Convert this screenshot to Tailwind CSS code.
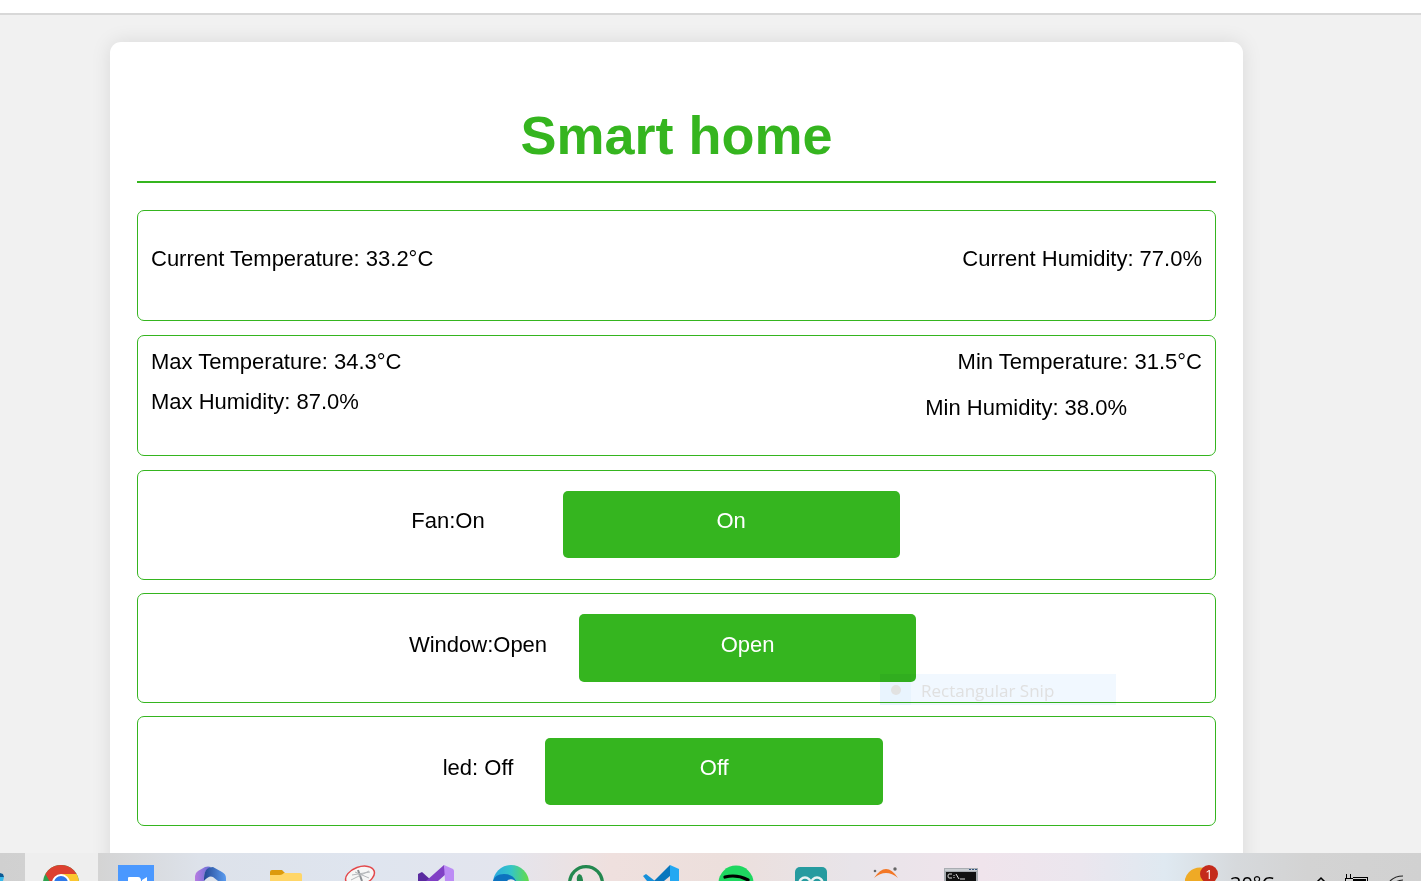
<!DOCTYPE html>
<html lang="en">
<head>
<meta charset="utf-8">
<meta name="viewport" content="width=device-width, initial-scale=1">
<title>Smart home</title>
<script src="https://cdn.jsdelivr.net/npm/@tailwindcss/browser@4"></script>
</head>
<body class="h-screen flex flex-col overflow-hidden bg-[#f1f1f1] font-['Liberation_Sans',Arial,sans-serif] text-[22px] leading-[26px] text-black">
<header class="h-[15px] shrink-0 bg-white border-b-2 border-[#d8d8d8]"></header>
<main class="flex-1 min-h-0 overflow-hidden pt-[27px] pl-[110px] pr-[178px]">
  <div class="min-h-full bg-white rounded-[11px] shadow-[0_0_20px_rgba(0,0,0,0.1)] px-[27px] pt-[62px] pb-16">
    <h1 class="text-center text-[54px] leading-[62px] font-bold text-[#35b51f] pb-[15px] border-b-2 border-[#35b51f]">Smart home</h1>

    <section class="mt-[27px] min-h-[111px] border border-[#35b51f] rounded-[7px] px-[13px] pt-[35px] flex justify-between items-start">
      <p>Current Temperature: 33.2°C</p>
      <p>Current Humidity: 77.0%</p>
    </section>

    <section class="mt-[14px] min-h-[121px] border border-[#35b51f] rounded-[7px] px-[13px] pt-[13px] flex justify-between items-start">
      <div class="flex flex-col gap-[14px]">
        <p>Max Temperature: 34.3°C</p>
        <p>Max Humidity: 87.0%</p>
      </div>
      <div class="flex flex-col gap-5 items-end">
        <p>Min Temperature: 31.5°C</p>
        <p class="pr-[75px]">Min Humidity: 38.0%</p>
      </div>
    </section>

    <div class="mt-[14px] flex flex-col gap-[13px]">
      <section class="min-h-[110px] border border-[#35b51f] rounded-[7px] pt-5 pr-[42px] flex justify-center items-start gap-[78px]">
        <p class="pt-[17px]" id="fan">Fan:On</p>
        <button type="button" aria-describedby="fan" class="w-[337px] h-[67px] pb-2 rounded-[5px] bg-[#35b51f] text-white">On</button>
      </section>
      <section class="relative min-h-[110px] border border-[#35b51f] rounded-[7px] pt-5 pr-[28px] flex justify-center items-start gap-8">
        <p class="pt-[18px]" id="window">Window:Open</p>
        <button type="button" aria-describedby="window" class="w-[337px] h-[68px] pb-[7px] rounded-[5px] bg-[#35b51f] text-white">Open</button>
        <div class="absolute left-[742px] top-20 w-[236px] h-[31px] flex items-center bg-[#f1f8ff] mix-blend-multiply font-['Open_Sans','Noto_Sans',sans-serif] text-[17px] text-[#e0e0e0]">
          <span class="w-[31px] h-full flex items-center justify-center bg-[#e9f4fe]"><span class="size-[10px] rounded-full bg-[#e2e2e2]"></span></span>
          <span class="pl-[10px] pt-[2px]">Rectangular Snip</span>
        </div>
      </section>
      <section class="min-h-[110px] border border-[#35b51f] rounded-[7px] pt-[21px] pr-[27px] flex justify-center items-start gap-8">
        <p class="pt-[17px]" id="led">led: Off</p>
        <button type="button" aria-describedby="led" class="w-[338px] h-[67px] pb-2 rounded-[5px] bg-[#35b51f] text-white">Off</button>
      </section>
    </div>
  </div>
</main>

<footer class="relative z-10 h-7 shrink-0 overflow-hidden flex justify-between items-start bg-[linear-gradient(90deg,#d0d0d0_0%,#d4d4d4_7%,#dde2ea_14%,#dfe5ef_26%,#e3e5ee_35%,#efe0de_43%,#ecdfdc_51%,#e8e4e9_60%,#f0e4ec_69%,#ebe6ee_76%,#dfe9f1_82%,#d6d9dc_87%,#d3d3d3_92%,#d1d1d1_100%)]">
  <nav class="flex gap-[2px]" aria-label="Taskbar">
    <button type="button" aria-label="App" class="w-[23px] h-7 pt-3"><svg class="block w-[23px] h-4" viewBox="0 0 23 16"><path d="M0 8 3 9 4 12H0z" fill="#0c5a94"/><path d="M0 12h4l-1 4H0z" fill="#35b8ea"/></svg></button>
    <button type="button" aria-label="Chrome" class="w-[73px] h-7 pt-3 pl-[18px] bg-[#eeeeee]"><svg class="block w-9 h-4" viewBox="0 0 36 16"><circle cx="18" cy="18" r="18" fill="#2da24d"/><path d="M2.4 9A18 18 0 0 1 33.6 9H18L10.2 22.500z" fill="#dd4030"/><path d="M33.600 9A18 18 0 0 1 36 18H25L18 9z" fill="#fcc62e"/><circle cx="18" cy="18" r="9" fill="#fff"/><circle cx="18" cy="18" r="7" fill="#2f79e8"/></svg></button>
    <button type="button" aria-label="Zoom" class="w-[73px] h-7 pt-3 pl-[18px]"><svg class="block w-9 h-4" viewBox="0 0 36 16"><path d="M0 0h36v16H0z" fill="#4a98ff"/><path d="M10 16v-3q0-1 1-1h9q3 0 3 4zM24 15l5-3v4h-5z" fill="#fff"/></svg></button>
    <button type="button" aria-label="Microsoft 365" class="w-[73px] h-7 pt-3 pl-[18px]"><svg class="block w-9 h-4" viewBox="0 0 36 16"><defs><linearGradient id="m1"><stop stop-color="#b77be2"/><stop offset="1" stop-color="#626fd5"/></linearGradient><linearGradient id="m2"><stop stop-color="#244894"/><stop offset="1" stop-color="#5b9cf0"/></linearGradient></defs><path d="M2 16V11q0-3 3-5l7-4q3-1 6 0l-5 4q-2 2-2 5v5z" fill="url(#m1)"/><path d="M11 13q0-6 3-9 2-2 6-2l9 5q4 2 4 6v3h-8l-5-4q-4-2-9 4z" fill="url(#m2)"/></svg></button>
    <button type="button" aria-label="File Explorer" class="w-[73px] h-7 pt-3 pl-[18px]"><svg class="block w-9 h-4" viewBox="0 0 36 16"><path d="M2 16V7q0-2 2-2h10l3 3v4H2z" fill="#dc9b0d"/><path d="M2 16V10h10q2 0 4-2h16q2 0 2 2v6z" fill="#ffd668"/></svg></button>
    <button type="button" aria-label="Snipping Tool" class="w-[73px] h-7 pt-3 pl-[18px]"><svg class="block w-9 h-4" viewBox="0 0 36 16"><ellipse cx="17" cy="11" rx="15" ry="9" transform="rotate(-20 17 11)" fill="#f6f6f6" stroke="#e3484b" stroke-width="1.500"/><path d="m15 5 4 11" fill="none" stroke="#8c9094" stroke-width="2"/><path d="M9 10 27 7M8 15l18-9M12 7l14 6" fill="none" stroke="#b4b7ba"/></svg></button>
    <button type="button" aria-label="Visual Studio" class="w-[73px] h-7 pt-3 pl-[18px]"><svg class="block w-9 h-4" viewBox="0 0 36 16"><path d="M0 9 4 7l10 9H0z" fill="#5a2ba0"/><path d="M8 16 26 0l2 9-8 7z" fill="#8040c5"/><path d="m26 0 9 4q1 1 1 2v10h-9z" fill="#bc8cf5"/></svg></button>
    <button type="button" aria-label="Edge" class="w-[73px] h-7 pt-3 pl-[18px]"><svg class="block w-9 h-4" viewBox="0 0 36 16"><defs><linearGradient id="eg"><stop stop-color="#2aa8e0"/><stop offset=".5" stop-color="#34c4c8"/><stop offset="1" stop-color="#65dc45"/></linearGradient></defs><circle cx="18" cy="18" r="18" fill="url(#eg)"/><path d="M0 16Q2 9 11 9q9 0 12 7z" fill="#0d72bf"/><path d="M14 16q3-3 7-1l1 1z" fill="#e6ebef"/></svg></button>
    <button type="button" aria-label="WhatsApp" class="w-[73px] h-7 pt-3 pl-[18px]"><svg class="block w-9 h-4" viewBox="0 0 36 16"><circle cx="18" cy="18" r="16.400" fill="none" stroke="#23884f" stroke-width="3.200"/><path d="M9 16q-1-5 2-7 3 0 4 6v1z" fill="#23884f"/></svg></button>
    <button type="button" aria-label="Visual Studio Code" class="w-[73px] h-7 pt-3 pl-[18px]"><svg class="block w-9 h-4" viewBox="0 0 36 16"><path d="m0 11 3-2 9 7H4z" fill="#1690da"/><path d="M11 16 27 0v11l-6 5z" fill="#0876bd"/><path d="m27 0 9 4v12h-9z" fill="#24a8f2"/></svg></button>
    <button type="button" aria-label="Spotify" class="w-[73px] h-7 pt-3 pl-[18px]"><svg class="block w-9 h-4" viewBox="0 0 36 16"><circle cx="18" cy="18" r="17.500" fill="#1ed760"/><path d="M7 12q12-3 23 3" fill="none" stroke="#000" stroke-width="3.200" stroke-linecap="round"/></svg></button>
    <button type="button" aria-label="Arduino" class="w-[73px] h-7 pt-3 pl-[18px]"><svg class="block w-9 h-4" viewBox="0 0 36 16"><rect x="2" y="2" width="32" height="32" rx="5" fill="#269b9f"/><circle cx="12" cy="18" r="5.500" fill="none" stroke="#e9f3f3" stroke-width="2.500"/><circle cx="24" cy="18" r="5.500" fill="none" stroke="#e9f3f3" stroke-width="2.500"/></svg></button>
    <button type="button" aria-label="Jupyter" class="w-[73px] h-7 pt-3 pl-[18px]"><svg class="block w-9 h-4" viewBox="0 0 36 16"><path d="M6 13Q18-5 30 13 18 3 6 13z" fill="#f37726"/><circle cx="7" cy="6" r="1.300" fill="#666"/><circle cx="27" cy="4" r="1.700" fill="#666"/></svg></button>
    <button type="button" aria-label="Command Prompt" class="w-[73px] h-7 pt-3 pl-[18px]"><svg class="block w-9 h-4" viewBox="0 0 36 16"><path d="M1 3h34v13H1z" fill="#a9adb2"/><path d="M2 4h32v2H2z" fill="#c8ccd0"/><path d="M26 4h2v1h-2zM29 4h2v1h-2zM32 4h2v1h-2z" fill="#34527c"/><path d="M3 7h30v9H3z" fill="#111"/><path d="M9 9H6q-1 0-1 2t1 2h3M11 10v1M11 12v1M13 9l3 5M17 14h5" fill="none" stroke="#ddd"/></svg></button>
  </nav>
  <div class="flex items-start font-['Open_Sans','Noto_Sans',sans-serif] text-black" aria-label="System tray">
    <div class="relative w-[37px] h-7">
      <svg class="block w-[37px] h-7" viewBox="0 0 37 28"><circle cx="15" cy="30" r="15.500" fill="#efaa25"/></svg>
      <span class="absolute left-[15px] top-3 size-[18px] rounded-full bg-[#c42b1c] text-white text-[13px] leading-[18px] text-center">1</span>
    </div>
    <span class="pl-[8px] pt-[19px] w-[88px] text-[20px] leading-[24px]">30°C</span>
    <svg class="block w-[111px] h-7" viewBox="0 0 111 28"><path d="m5 31 6-6 6 6" fill="none" stroke="#000" stroke-width="1.500"/><path d="M36 21h1v4h-1zM40 21h1v4h-1zM35 25h8v1h-7v2h-1zM43 24h15v4h-1v-3H43z" fill="#000"/><path d="M43 26h13v2H43z" fill="#000"/><path d="M80 28q5-5 13-5M86 29q3-2 7-2" fill="none" stroke="#222" stroke-width="1.200"/></svg>
  </div>
</footer>
</body>
</html>
